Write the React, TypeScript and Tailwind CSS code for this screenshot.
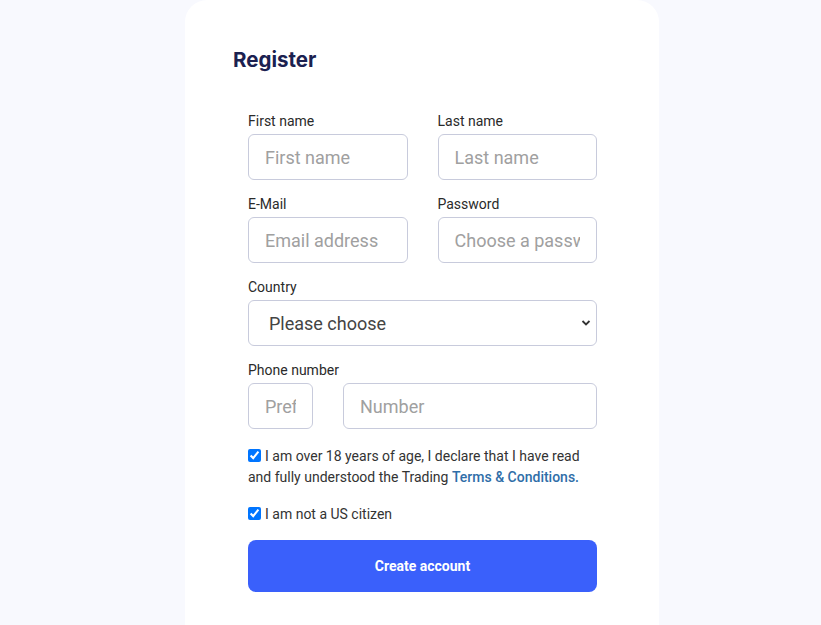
import React from "react";

const field =
  "h-[46px] rounded-[6px] border border-[#c8cbdc] bg-white px-4 text-[18px] text-[#444] placeholder:text-[#a0a0a0] outline-none";

function Label({ children }: { children: React.ReactNode }) {
  return (
    <label className="mb-[3px] block text-[14px] leading-[20px] text-[#2a2a2a]">
      {children}
    </label>
  );
}

export default function App() {
  return (
    <div
      className="min-h-[625px] w-full bg-[#f8f9fe]"
      style={{ fontFamily: "Roboto, 'Liberation Sans', sans-serif" }}
    >
      <div className="ml-[185px] h-[625px] w-[474px] rounded-t-[22px] bg-white pl-[48px] pt-[46px]">
        <h1
          className="text-[20.5px] font-bold leading-[28px] text-[#1b2150]"
          style={{ fontFamily: "Inter, 'Liberation Sans', sans-serif" }}
        >
          Register
        </h1>

        <form className="ml-[15px] mt-[37px] w-[349px]">
          <div className="grid grid-cols-2 gap-x-[30px] gap-y-[14px]">
            <div>
              <Label>First name</Label>
              <input className={`${field} w-full`} placeholder="First name" />
            </div>
            <div>
              <Label>Last name</Label>
              <input className={`${field} w-full`} placeholder="Last name" />
            </div>
            <div>
              <Label>E-Mail</Label>
              <input className={`${field} w-full`} placeholder="Email address" />
            </div>
            <div>
              <Label>Password</Label>
              <input
                type="text"
                className={`${field} w-full`}
                placeholder="Choose a password"
              />
            </div>
          </div>

          <div className="mt-[14px]">
            <Label>Country</Label>
            <div className="relative">
              <select
                className={`${field} w-full appearance-none pl-[20px] text-[#333]`}
                defaultValue=""
              >
                <option value="">Please choose</option>
              </select>
              <svg
                className="pointer-events-none absolute right-[6px] top-[19px]"
                width="10"
                height="8"
                viewBox="0 0 10 8"
              >
                <path
                  d="M1.5 2 L5 5.5 L8.5 2"
                  fill="none"
                  stroke="#333"
                  strokeWidth="1.8"
                />
              </svg>
            </div>
          </div>

          <div className="mt-[14px]">
            <Label>Phone number</Label>
            <div className="flex gap-[30px]">
              <input
                className={`${field} w-[65px] shrink-0`}
                placeholder="Prefix"
              />
              <input
                className={`${field} min-w-0 flex-1`}
                placeholder="Number"
              />
            </div>
          </div>

          <div className="mt-[17px] text-[14px] leading-[21px] text-[#333]">
            <label className="block">
              <input
                type="checkbox"
                defaultChecked
                className="mr-[4px] h-[13px] w-[13px] align-[-1px] accent-[#0075ff]"
              />
              I am over 18 years of age, I declare that I have read and fully
              understood the Trading{" "}
              <a className="font-medium text-[#2f6ea8]">
                Terms &amp; Conditions.
              </a>
            </label>
            <label className="mt-[16px] block">
              <input
                type="checkbox"
                defaultChecked
                className="mr-[4px] h-[13px] w-[13px] align-[-1px] accent-[#0075ff]"
              />
              I am not a US citizen
            </label>
          </div>

          <button
            type="button"
            className="mt-[15px] h-[52px] w-full rounded-[8px] bg-[#3a60fb] text-[14px] font-bold text-white"
          >
            Create account
          </button>
        </form>
      </div>
    </div>
  );
}
